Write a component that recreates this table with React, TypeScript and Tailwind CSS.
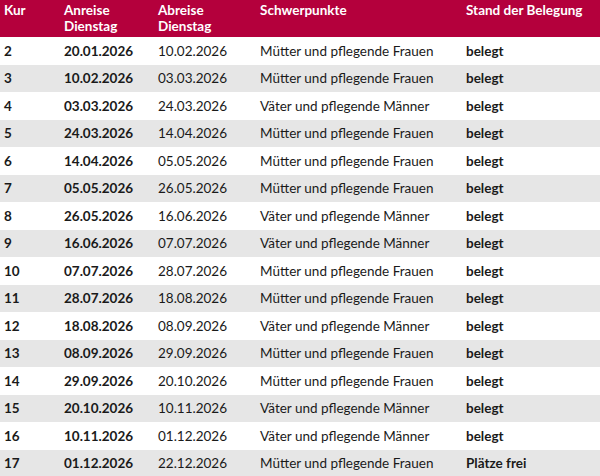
import React from "react";

const rows: [string, string, string, string, string][] = [
  ["2", "20.01.2026", "10.02.2026", "Mütter und pflegende Frauen", "belegt"],
  ["3", "10.02.2026", "03.03.2026", "Mütter und pflegende Frauen", "belegt"],
  ["4", "03.03.2026", "24.03.2026", "Väter und pflegende Männer", "belegt"],
  ["5", "24.03.2026", "14.04.2026", "Mütter und pflegende Frauen", "belegt"],
  ["6", "14.04.2026", "05.05.2026", "Mütter und pflegende Frauen", "belegt"],
  ["7", "05.05.2026", "26.05.2026", "Mütter und pflegende Frauen", "belegt"],
  ["8", "26.05.2026", "16.06.2026", "Väter und pflegende Männer", "belegt"],
  ["9", "16.06.2026", "07.07.2026", "Väter und pflegende Männer", "belegt"],
  ["10", "07.07.2026", "28.07.2026", "Mütter und pflegende Frauen", "belegt"],
  ["11", "28.07.2026", "18.08.2026", "Mütter und pflegende Frauen", "belegt"],
  ["12", "18.08.2026", "08.09.2026", "Väter und pflegende Männer", "belegt"],
  ["13", "08.09.2026", "29.09.2026", "Mütter und pflegende Frauen", "belegt"],
  ["14", "29.09.2026", "20.10.2026", "Mütter und pflegende Frauen", "belegt"],
  ["15", "20.10.2026", "10.11.2026", "Väter und pflegende Männer", "belegt"],
  ["16", "10.11.2026", "01.12.2026", "Väter und pflegende Männer", "belegt"],
  ["17", "01.12.2026", "22.12.2026", "Mütter und pflegende Frauen", "Plätze frei"],
];

const cols = "grid grid-cols-[64px_94px_102px_206px_1fr]";

export default function App() {
  return (
    <div className="w-[600px] h-[476px] overflow-hidden bg-white text-[#1a1a1a] text-[13.5px] font-['Lato',sans-serif]">
      <div className={`${cols} h-[37px] bg-[#b4003c] text-white font-bold leading-[16px] pt-[2px]`}>
        <div className="pl-[4px]">Kur</div>
        <div>Anreise<br />Dienstag</div>
        <div>Abreise<br />Dienstag</div>
        <div>Schwerpunkte</div>
        <div>Stand der Belegung</div>
      </div>
      {rows.map((r, i) => (
        <div
          key={r[0]}
          className={`${cols} h-[27.5px] items-center ${i % 2 === 1 ? "bg-[#e6e6e6]" : "bg-white"}`}
        >
          <div className="pl-[4px] font-bold">{r[0]}</div>
          <div className="font-bold">{r[1]}</div>
          <div>{r[2]}</div>
          <div>{r[3]}</div>
          <div className="font-bold">{r[4]}</div>
        </div>
      ))}
    </div>
  );
}
